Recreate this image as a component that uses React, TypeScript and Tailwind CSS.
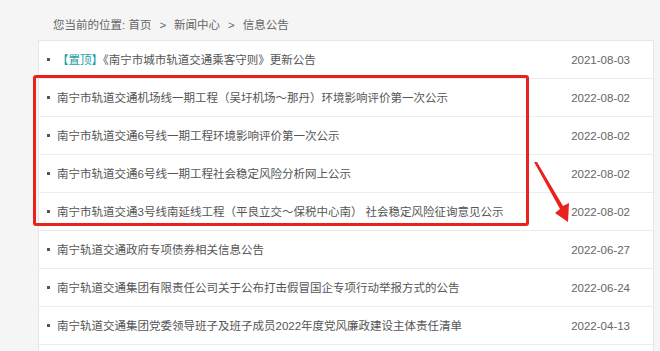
import React from 'react';

const rows = [
  { title: '南宁市轨道交通机场线一期工程（吴圩机场～那丹）环境影响评价第一次公示', date: '2022-08-02' },
  { title: '南宁市轨道交通6号线一期工程环境影响评价第一次公示', date: '2022-08-02' },
  { title: '南宁市轨道交通6号线一期工程社会稳定风险分析网上公示', date: '2022-08-02' },
  { title: '南宁市轨道交通3号线南延线工程（平良立交～保税中心南） 社会稳定风险征询意见公示', date: '2022-08-02' },
  { title: '南宁轨道交通政府专项债券相关信息公告', date: '2022-06-27' },
  { title: '南宁轨道交通集团有限责任公司关于公布打击假冒国企专项行动举报方式的公告', date: '2022-06-24' },
  { title: '南宁轨道交通集团党委领导班子及班子成员2022年度党风廉政建设主体责任清单', date: '2022-04-13' },
];

function Row({ children, date }: { children: React.ReactNode; date: string }) {
  return (
    <div className="h-[38px] flex items-center border-b border-[#ececec] pl-[8px] pr-[23px]">
      <span className="w-[3px] h-[3px] bg-[#555] shrink-0" />
      <span className="ml-[7px] flex-1 text-[#555] whitespace-nowrap">{children}</span>
      <span className="text-[#666]">{date}</span>
    </div>
  );
}

export default function App() {
  return (
    <div
      className="relative w-[660px] h-[351px] overflow-hidden bg-[#f5f5f5] text-[11.5px] leading-[14px]"
      style={{ fontFamily: '"Liberation Sans", "Noto Sans CJK SC", sans-serif' }}
    >
      {/* breadcrumb */}
      <div className="pt-[18px] pl-[53px] h-[40px] text-[#666] flex items-start">
        <span>您当前的位置: 首页</span>
        <span className="mx-[8px]">&gt;</span>
        <span>新闻中心</span>
        <span className="mx-[8px]">&gt;</span>
        <span>信息公告</span>
      </div>

      {/* list panel */}
      <div className="ml-[38px] w-[616px] bg-white border-l border-r border-t border-[#e6e6e6] pb-[40px]">
        <Row date="2021-08-03">
          <span className="text-[#1a9fa3]">【置顶】</span>《南宁市城市轨道交通乘客守则》更新公告
        </Row>
        {rows.map((r, i) => (
          <Row key={i} date={r.date}>
            {r.title}
          </Row>
        ))}
      </div>

      {/* red highlight box */}
      <div className="absolute left-[33px] top-[75px] w-[496px] h-[151px] border-[3px] border-[#e8231d] rounded-[3px]" />

      {/* red arrow */}
      <svg className="absolute left-0 top-0" width="660" height="351" viewBox="0 0 660 351">
        <polygon
          points="534,162 537,162 563,206 569,203 568,222 555,213 560,209"
          fill="#e8231d"
        />
      </svg>
    </div>
  );
}
